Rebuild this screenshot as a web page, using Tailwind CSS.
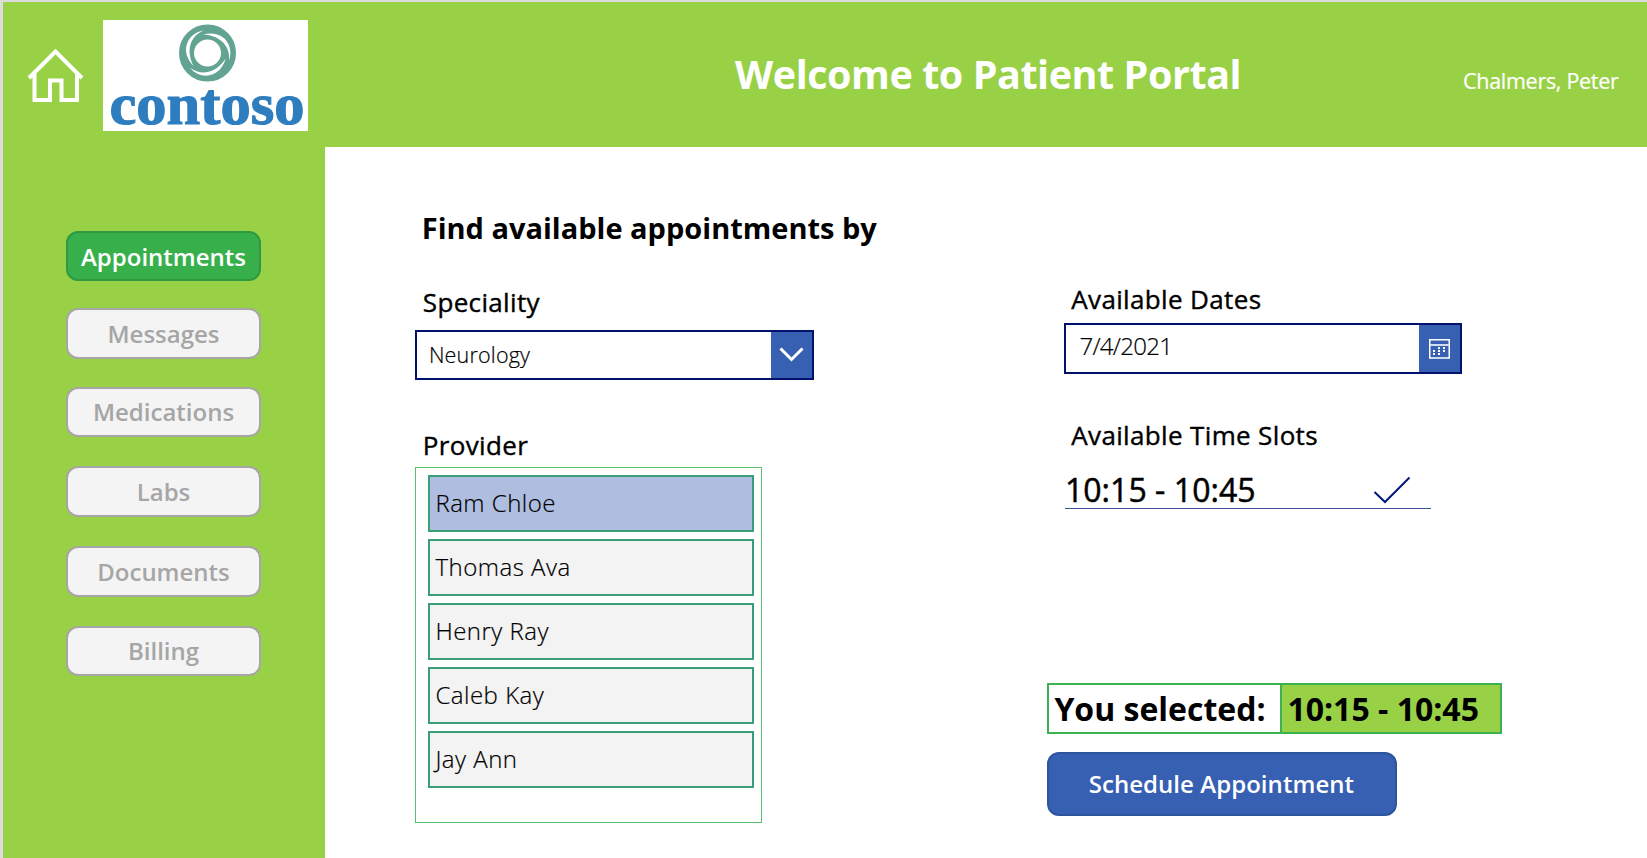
<!DOCTYPE html>
<html lang="en">
<head>
<meta charset="utf-8">
<title>Patient Portal</title>
<script src="https://cdn.jsdelivr.net/npm/@tailwindcss/browser@4"></script>
</head>
<body class="w-[1647px] h-[858px] overflow-hidden bg-[#dcdcdc] pl-[2.5px] pt-[2px] font-['Open_Sans',sans-serif] text-black whitespace-nowrap">
<div class="flex h-full flex-col bg-white">
  <header class="flex h-[145px] shrink-0 items-start bg-[#99d146]">
    <svg class="mt-[46.500px] ml-[24px] h-[54px] w-[58px]" viewBox="0 0 58 54" fill="none" stroke="#fff" stroke-width="4"><path d="M2 29 28.500 2.500 55 29M7.500 24V51H23V31.500H34.500V51H50V24"/></svg>
    <svg class="mt-[17.500px] ml-[18.500px] h-[111px] w-[205px] shrink-0 overflow-visible" viewBox="0 0 205 111">
      <rect width="205" height="111" fill="#fff"/>
      <g transform="translate(104.500 33)"><circle r="21" fill="none" stroke="#62a491" stroke-width="15"/>
        <g fill="#fff">
          <path d="M-4-22.500C-19-20-29-3-14 13C-22-3-17-17-4-22.500Z"/>
          <path transform="rotate(120)" d="M-4-22.500C-19-20-29-3-14 13C-22-3-17-17-4-22.500Z"/>
          <path transform="rotate(240)" d="M-4-22.500C-19-20-29-3-14 13C-22-3-17-17-4-22.500Z"/>
        </g></g>
      <text x="6.500" y="103.500" textLength="195" lengthAdjust="spacingAndGlyphs" font-family="Liberation Serif,serif" font-size="59" font-weight="700" fill="#2e7dbe" stroke="#2e7dbe" stroke-width="1.100">contoso</text>
    </svg>
    <h1 class="mt-[45px] ml-[427px] text-[39.500px] leading-[54px] font-bold tracking-[-0.450px] text-white">Welcome to Patient Portal</h1>
    <span class="mt-[61px] mr-[28.500px] ml-auto text-[21.500px] leading-[36px] tracking-[-0.290px] text-white [-webkit-text-stroke:0.200px_#fff]">Chalmers, Peter</span>
  </header>
  <div class="flex min-h-0 flex-1">
    <nav class="flex w-[322.500px] shrink-0 flex-col items-center gap-[28.500px] bg-[#99d146] pt-[83.500px] pr-[0.500px] text-[24px] font-semibold text-[#a6a6a6]">
      <button class="h-[50.500px] w-[195px] shrink-0 rounded-[12px] border-2 border-[#2d9a41] bg-[#37b04c] pt-[2px] text-white">Appointments</button>
      <button class="-mt-[1.500px] h-[50.500px] w-[195px] shrink-0 rounded-[12px] border-2 border-[#a6a6a6] bg-[#f4f4f4] pt-[1px]">Messages</button>
      <button class="-mt-[0.500px] h-[50.500px] w-[195px] shrink-0 rounded-[12px] border-2 border-[#a6a6a6] bg-[#f4f4f4]">Medications</button>
      <button class="mt-[0.500px] h-[50.500px] w-[195px] shrink-0 rounded-[12px] border-2 border-[#a6a6a6] bg-[#f4f4f4] pt-[1px]">Labs</button>
      <button class="mt-[1px] h-[50.500px] w-[195px] shrink-0 rounded-[12px] border-2 border-[#a6a6a6] bg-[#f4f4f4] pt-[1px]">Documents</button>
      <button class="mt-[0.500px] h-[50.500px] w-[195px] shrink-0 rounded-[12px] border-2 border-[#a6a6a6] bg-[#f4f4f4]">Billing</button>
    </nav>
    <main class="flex pt-[60px] pl-[90.400px]">
      <section class="flex w-[631.500px] flex-col items-start">
        <h2 class="mt-[0.600px] ml-[6.400px] text-[29px] leading-[40px] font-bold">Find available appointments by</h2>
        <label class="mt-[34px] ml-[7.400px] text-[26px] leading-[40px] tracking-[0.350px] [-webkit-text-stroke:0.400px_#000]">Speciality</label>
        <div class="mt-[8px] flex h-[50.400px] w-[398.500px] justify-between border-2 border-[#00126b]">
          <span class="ml-[11.500px] text-[21.500px] leading-[46px] font-light tracking-[0.200px] [-webkit-text-stroke:0.200px_#000]">Neurology</span>
          <span class="flex w-[41px] items-center justify-center bg-[#3860b2]"><svg class="h-[15px] w-[25px]" viewBox="0 0 25 15" fill="none" stroke="#fff" stroke-width="3"><path d="M1.500 1.500 12.500 12.500 23.500 1.500"/></svg></span>
        </div>
        <label class="mt-[45.500px] ml-[7.400px] text-[26px] leading-[40px] tracking-[0.350px] [-webkit-text-stroke:0.400px_#000]">Provider</label>
        <div class="mt-[1.500px] flex h-[356px] w-[346.500px] flex-col gap-[7px] border border-[#5cc06c] pt-[7px] pl-[12px] text-[24px] leading-[51px] font-light tracking-[0.500px] [-webkit-text-stroke:0.200px_#000]">
          <div class="h-[57px] w-[326px] shrink-0 border-2 border-[#3a9f77] bg-[#afbee0] pl-[5px]">Ram Chloe</div>
          <div class="h-[57px] w-[326px] shrink-0 border-2 border-[#3a9f77] bg-[#f3f3f3] pl-[5px]">Thomas Ava</div>
          <div class="h-[57px] w-[326px] shrink-0 border-2 border-[#3a9f77] bg-[#f3f3f3] pl-[5px]">Henry Ray</div>
          <div class="h-[57px] w-[326px] shrink-0 border-2 border-[#3a9f77] bg-[#f3f3f3] pl-[5px]">Caleb Kay</div>
          <div class="h-[57px] w-[326px] shrink-0 border-2 border-[#3a9f77] bg-[#f3f3f3] pl-[5px]">Jay Ann</div>
        </div>
      </section>
      <section class="flex flex-col items-start pt-[72px]">
        <label class="ml-[24.400px] text-[26px] leading-[40px] tracking-[0.350px] [-webkit-text-stroke:0.400px_#000]">Available Dates</label>
        <div class="mt-[4px] ml-[17px] flex h-[51px] w-[398px] justify-between border-2 border-[#00126b]">
          <span class="ml-[13.500px] text-[24px] leading-[42px] font-light tracking-[-0.700px] [-webkit-text-stroke:0.200px_#000]">7/4/2021</span>
          <span class="flex w-[41px] items-center justify-center bg-[#3860b2]"><svg class="h-[20px] w-[21px]" viewBox="0 0 21 20" fill="none" stroke="#fff"><path stroke-width="1.500" d="M.75.75H20.250V19H.75Z"/><path stroke-width="2" stroke="#d2dcef" d="M1 6H20"/><path fill="#fff" stroke="none" d="M9 8h2v2H9zM14 8h2v2h-2zM4 11h2v2H4zM9 11h2v2H9zM14 11h2v2h-2zM4 14h2v2H4zM9 14h2v2H9z"/></svg></span>
        </div>
        <label class="mt-[41px] ml-[24.400px] text-[26px] leading-[40px] tracking-[0.350px] [-webkit-text-stroke:0.400px_#000]">Available Time Slots</label>
        <div class="mt-[14px] ml-[18px] flex h-[40px] w-[366px] items-start justify-between border-b border-[#3d509b]">
          <span class="text-[32px] leading-[41px] tracking-[0.050px] [-webkit-text-stroke:0.500px_#000]">10:15 - 10:45</span>
          <svg class="mt-[7px] mr-[20px] h-[28px] w-[38px]" viewBox="0 0 38 28" fill="none" stroke="#001878" stroke-width="2"><path d="M1.500 16 12 26 36.500 1.500"/></svg>
        </div>
        <div class="mt-[174px] flex h-[51px] w-[455px] border-2 border-[#3bb24f] text-[32px] leading-[47px] font-bold">
          <span class="w-[233px] border-r-2 border-[#3bb24f] pl-[5.500px]">You selected:</span>
          <span class="flex-1 bg-[#99d146] pl-[5.500px]">10:15 - 10:45</span>
        </div>
        <button class="mt-[18px] h-[64px] w-[350px] rounded-[12px] border-2 border-[#2e549d] bg-[#3860b2] pr-[1px] text-[24px] font-semibold tracking-[0.050px] text-white">Schedule Appointment</button>
      </section>
    </main>
  </div>
</div>
</body>
</html>
